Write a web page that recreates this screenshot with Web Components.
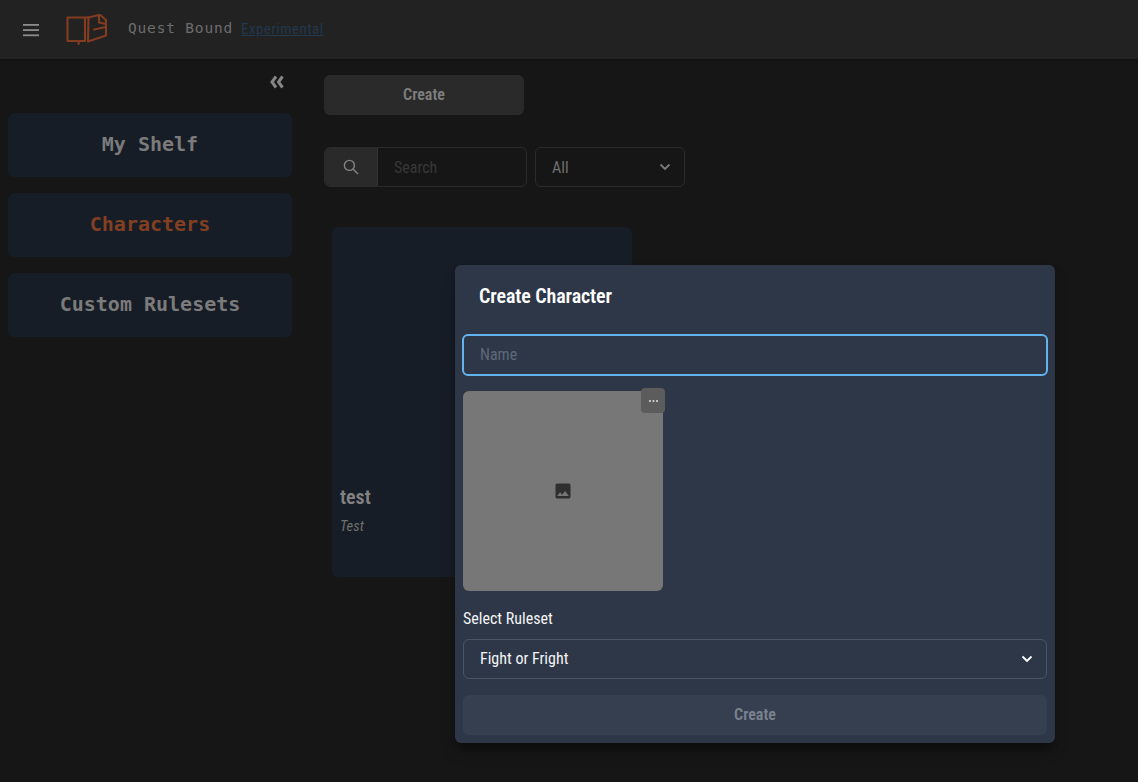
<!DOCTYPE html>
<html lang="en"><head><meta charset="utf-8"><title>Quest Bound</title>
<style>
html,body{margin:0;height:100%;background:#161616;overflow:hidden}
body{font-family:Roboto,"Liberation Sans",sans-serif;font-stretch:75%;position:relative;width:1138px;height:782px}
qb-shell{display:block;height:782px}
</style></head><body>
<qb-shell></qb-shell>
<qb-modal></qb-modal>
<script>
const def=(name,html)=>customElements.define(name,class extends HTMLElement{constructor(){super();this.attachShadow({mode:'open'}).innerHTML=html}});
def('qb-header',`<style>
:host{display:flex;align-items:center;height:59px;background:#222222;box-shadow:0 1px 3px rgba(0,0,0,.35);padding-left:23px;box-sizing:border-box;position:relative}
svg{display:block}
.logo{margin-left:27px}
.t{margin-left:20px;font:14.5px/1 "DejaVu Sans Mono",monospace;letter-spacing:.82px;color:#6d6d6d;margin-top:-2px;white-space:nowrap}
a{margin-left:8px;font:15px/1 Roboto,sans-serif;font-stretch:75%;color:#21384d;text-decoration:underline;margin-top:-1px;letter-spacing:.45px}
</style>
<svg width="16" height="18" viewBox="0 0 16 18" fill="#8c8c8c"><rect y="3" width="16" height="1.8"/><rect y="8.2" width="16" height="1.8"/><rect y="13.4" width="16" height="1.8"/></svg>
<svg class="logo" width="42" height="32" viewBox="0 0 42 32" fill="none" stroke="#833c20" stroke-width="2.1" stroke-linejoin="round" stroke-linecap="round"><path d="M1.500 3.500H19V27H1.500Z"/><path d="M12.700 27V30"/><path d="M19 3.500H23"/><path d="M22 27.500L22.500 3.500L34 .8L40 6V21.500L22 27.500"/><path d="M33 1V8.500L40 10"/><path d="M28 15.500L40 13"/></svg>
<span class="t">Quest Bound</span><a href="#">Experimental</a>`);
def('qb-nav-item',`<style>
:host{display:flex;align-items:center;justify-content:center;height:64px;box-sizing:border-box;padding-bottom:2px;background:#171d26;border-radius:6px;font:700 20px/1 "DejaVu Sans Mono",monospace;color:#7b7b7b}
:host([active]){color:#833f22}
</style><slot></slot>`);
def('qb-sidebar',`<style>
:host{display:flex;flex-direction:column;width:300px;box-sizing:border-box;padding:0 8px;flex:none}
.top{display:flex;justify-content:flex-end;height:54px;padding:16px 8px 0 0;box-sizing:border-box}
svg{display:block}
nav{display:flex;flex-direction:column;gap:16px}
</style><div class="top"><svg width="14" height="14" viewBox="0 0 14 14" fill="none" stroke="#858585" stroke-width="3"><path d="M6 1.500L2 7L6 12.500M12.500 1.500L8.500 7L12.500 12.500"/></svg></div>
<nav><qb-nav-item>My Shelf</qb-nav-item><qb-nav-item active>Characters</qb-nav-item><qb-nav-item>Custom Rulesets</qb-nav-item></nav>`);
def('qb-toolbar',`<style>
:host{display:flex;gap:8px;height:40px;font-size:16px}
.group{display:flex;width:203px;height:40px;box-sizing:border-box;border-radius:6px;border:1px solid #2a2a2a;overflow:hidden}
.addon{width:53px;background:#2a2a2a;border-right:1px solid #333;display:flex;align-items:center;justify-content:center;flex:none;box-sizing:border-box}
.in{flex:1;padding-left:16px;color:#383838;display:flex;align-items:center}
.sel{display:flex;align-items:center;justify-content:space-between;width:150px;height:40px;box-sizing:border-box;border:1px solid #2a2a2a;border-radius:6px;padding:0 13px 0 16px;color:#6f6f6f}
svg{display:block}
</style><div class="group"><div class="addon"><svg width="16" height="16" viewBox="0 0 16 16" fill="none" stroke="#828282" stroke-width="1.4"><circle cx="6.400" cy="6.400" r="5"/><path d="M10 10L15 15"/></svg></div><div class="in">Search</div></div>
<div class="sel"><span>All</span><svg width="12" height="8" viewBox="0 0 12 8" fill="none" stroke="#7a7a7a" stroke-width="1.800"><path d="M1.500 1.500L6 6L10.500 1.500"/></svg></div>`);
def('qb-card',`<style>
:host{display:flex;flex-direction:column;justify-content:flex-end;width:300px;height:350px;box-sizing:border-box;background:#171d26;border-radius:6px;padding:0 8px 40px;margin-left:8px}
h2{margin:0;font:600 20px/24px Roboto,sans-serif;font-stretch:75%;color:#828282}
p{margin:8px 0 0;font:italic 14.500px/20px Roboto,sans-serif;font-stretch:75%;color:#6f6f6f}
</style><h2>test</h2><p>Test</p>`);
def('qb-main',`<style>
:host{display:flex;flex-direction:column;align-items:flex-start;flex:1;padding:16px 0 0 24px}
button{width:200px;height:40px;border:0;border-radius:6px;background:#2a2a2a;color:#7d7d7d;font:600 16px Roboto,sans-serif;font-stretch:75%;margin-bottom:32px;padding:0 0 2px}
qb-card{margin-top:40px}
</style><button>Create</button><qb-toolbar></qb-toolbar><qb-card></qb-card>`);
def('qb-shell',`<style>
:host{display:block}
.b{display:flex}
</style><qb-header></qb-header><div class="b"><qb-sidebar></qb-sidebar><qb-main></qb-main></div>`);
def('qb-modal',`<style>
:host{position:absolute;left:455px;top:265px;width:600px;height:478px;box-sizing:border-box;background:#2d3748;border-radius:6px;box-shadow:0 10px 15px -3px rgba(0,0,0,.35),0 4px 6px -2px rgba(0,0,0,.25);color:#fff;padding:0 8px;display:flex;flex-direction:column}
h1{margin:0 0 0 16px;height:69px;font:600 20px/63px Roboto,sans-serif;font-stretch:75%;letter-spacing:-.1px;color:#fff}
.name{height:42px;box-sizing:border-box;border:2px solid #63b3ed;border-radius:6px;padding:0 0 2px 16px;display:flex;align-items:center;color:#5f6978;font-size:16px;margin-left:-1px;width:586px}
.pic{position:relative;width:200px;height:200px;background:#777;border-radius:6px;margin-top:15px;display:flex;align-items:center;justify-content:center}
.more{position:absolute;right:-2px;top:-3px;width:24px;height:25px;background:#5c5c5c;border-radius:4px;display:flex;align-items:center;justify-content:center}
label{display:block;margin-top:18px;font-size:16px;line-height:20px;color:#f4f4f5}
.sel{margin-top:10px;height:40px;width:584px;box-sizing:border-box;border:1px solid #4c5566;border-radius:6px;padding:0 13px 0 16px;display:flex;align-items:center;justify-content:space-between;font-size:16px;color:#f4f4f5}
.sel span{margin-top:-2px}
button{margin-top:16px;width:584px;height:40px;border:0;border-radius:6px;background:#363f4f;color:#7b8290;font:600 16px Roboto,sans-serif;font-stretch:75%;padding:0 0 2px}
svg{display:block}
</style><h1>Create Character</h1><div class="name">Name</div>
<div class="pic"><svg width="20" height="20" viewBox="0 0 24 24" fill="#2f2f2f"><path d="M21 19V5c0-1.100-.9-2-2-2H5c-1.100 0-2 .9-2 2v14c0 1.100.9 2 2 2h14c1.100 0 2-.9 2-2zM8.500 13.500l2.500 3 3.500-4.500 4.500 6H5l3.500-4.500z"/></svg>
<div class="more"><svg width="11" height="4" viewBox="0 0 11 4" fill="#d6d6d6"><circle cx="2" cy="2" r="1.100"/><circle cx="5.500" cy="2" r="1.100"/><circle cx="9" cy="2" r="1.100"/></svg></div></div>
<label>Select Ruleset</label>
<div class="sel"><span>Fight or Fright</span><svg width="12" height="8" viewBox="0 0 12 8" fill="none" stroke="#fff" stroke-width="1.900"><path d="M1.500 1.500L6 6L10.500 1.500"/></svg></div>
<button>Create</button>`);
</script></body></html>
